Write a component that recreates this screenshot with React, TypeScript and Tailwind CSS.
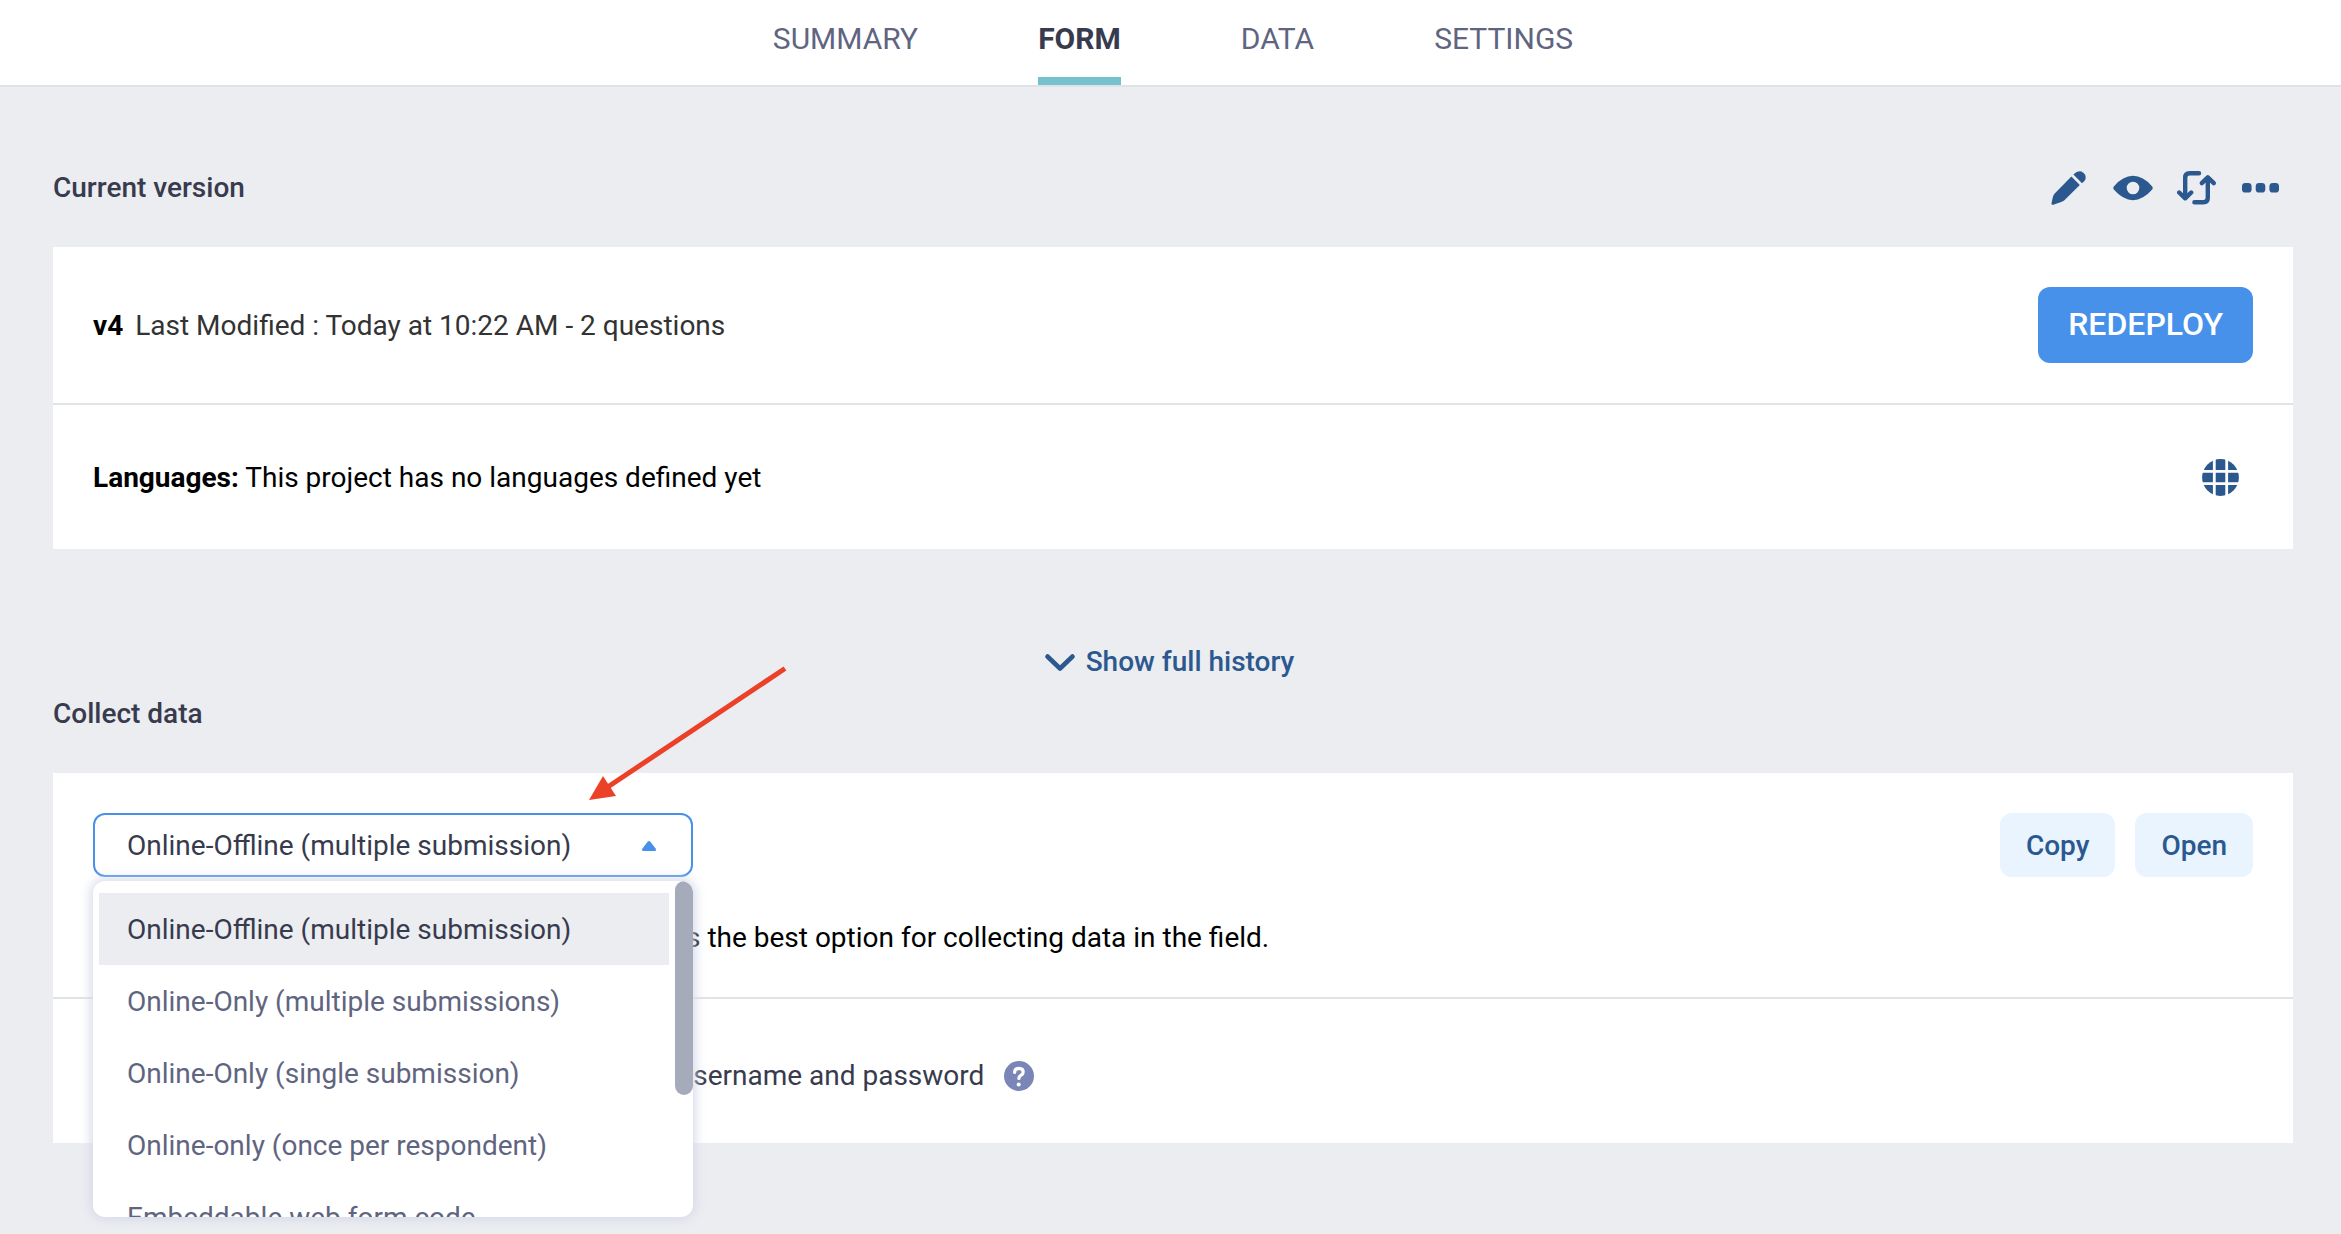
import React from "react";

const tabs = ["SUMMARY", "FORM", "DATA", "SETTINGS"];

const modes = [
    "Online-Offline (multiple submission)",
    "Online-Only (multiple submissions)",
    "Online-Only (single submission)",
    "Online-only (once per respondent)",
    "Embeddable web form code",
];

function EditIcon()
{
    return (
        <svg className="size-10" viewBox="0 0 40 40" fill="currentColor" aria-hidden="true">
            <path d="M22.400 8.600 30.800 17 15.400 32.300q-1.400 1.300-3.200 1.700L4.400 36.800q-2.400.4-1.900-1.600l1.300-6q.4-2 1.900-3.600L22.400 8.600Z" />
            <path d="M24.400 6.600q4-4.400 8-3.200 5.400 2.600 4 7.800-.6 1.900-3.400 4L24.400 6.600Z" />
        </svg>
    )
}

function EyeIcon()
{
    return (
        <svg className="size-10" viewBox="0 0 40 40" fill="currentColor" aria-hidden="true">
            <path fillRule="evenodd" d="M.8 18.4Q10 7.8 20 7.800T39.200 18.400q1 1.600 0 3.200Q30 32.200 20 32.200T.8 21.600q-1-1.600 0-3.200ZM20 13.700a6.300 6.300 0 1 0 0 12.600 6.300 6.300 0 0 0 0-12.600Z" />
        </svg>
    )
}

function ReplaceIcon()
{
    return (
        <svg className="size-10" viewBox="0 0 40 40" fill="none" stroke="currentColor" strokeWidth="4.4" strokeLinecap="round" strokeLinejoin="round" aria-hidden="true">
            <path d="M22 5.200H12.600q-4.400 0-4.400 4.400V29.500M2.200 24.500l6 5.800 6-5.800" />
            <path d="M17.400 34.200h9q4.400 0 4.400-4.400V10.500M24.800 15.200l6-5.800 6 5.800" />
        </svg>
    )
}

function MoreIcon()
{
    return (
        <svg className="size-10" viewBox="0 0 40 40" fill="currentColor" aria-hidden="true">
            <rect x="1" y="15" width="9.6" height="9.6" rx="3.4" />
            <rect x="14.7" y="15" width="9.6" height="9.6" rx="3.4" />
            <rect x="28.4" y="15" width="9.6" height="9.6" rx="3.4" />
        </svg>
    )
}

function GlobeIcon()
{
    return (
        <svg className="size-10" viewBox="0 0 40 40" aria-hidden="true">
            <circle cx="19.5" cy="20.5" r="18.4" fill="currentColor" />
            <path d="M13.300 0v40M25.700 0v40M0 14.300h40M0 26.700h40" stroke="#fff" strokeWidth="2.8" />
        </svg>
    )
}

const actions = [
    { label: "Edit form", icon: <EditIcon /> },
    { label: "Preview form", icon: <EyeIcon /> },
    { label: "Replace form", icon: <ReplaceIcon /> },
    { label: "More actions", icon: <MoreIcon /> },
];

function ModeSelect()
{
    const [mode, setMode] = React.useState(modes[0]);
    const [open, setOpen] = React.useState(true);

    function toggle(event: React.MouseEvent<HTMLSelectElement>)
    {
        // the list below replaces the native popup
        event.preventDefault();
        setOpen((prev) => !prev);
    }

    return (
        <div className="relative w-[600px]">
            <select
                aria-label="Collection mode"
                value={mode}
                onMouseDown={toggle}
                onChange={(event) => setMode(event.target.value)}
                className="block h-16 w-full appearance-none rounded-xl border-2 border-[#4891ea] bg-white pl-8 pr-16 pt-0.5 text-[#373b4d] outline-none"
            >
                {modes.map((m) => <option key={m}>{m}</option>)}
            </select>
            <svg className="pointer-events-none absolute right-9 top-7 h-[10px] w-4" viewBox="0 0 16 10" fill="#4891ea" aria-hidden="true">
                <path d="M6.600.7q1.400-1.400 2.800 0l5 6.600Q16 10 13.600 10H2.400Q0 10 1.600 7.300Z" />
            </svg>

            {/* red pointer drawn over the card edge */}
            <svg className="pointer-events-none absolute -top-[148px] right-[-94px] z-20 h-[138px] w-[200px]" viewBox="0 0 200 138" aria-hidden="true">
                <path d="M20 122.500 198 3.500" stroke="#ea4128" strokeWidth="5" />
                <path d="M2 135 16 111 29 131Z" fill="#ea4128" />
            </svg>

            {open && (
                <div className="absolute inset-x-0 top-[68px] z-10 h-[336px] overflow-hidden rounded-xl bg-white shadow-[0_0_12px_2px_#d4d8e8]">
                    <ul className="py-3 pl-[6px] pr-6">
                        {modes.map((m) => (
                            <li key={m}>
                                <button
                                    type="button"
                                    onClick={() => { setMode(m); setOpen(false); }}
                                    className={m === mode
                                        ? "block h-[72px] w-full bg-[#ecedf1] pl-7 pt-0.5 text-left text-[#373b4d]"
                                        : "block h-[72px] w-full pl-7 pt-0.5 text-left text-[#5f6580]"}
                                >
                                    {m}
                                </button>
                            </li>
                        ))}
                    </ul>
                    <div className="absolute right-0 top-0 h-[214px] w-[18px] rounded-full bg-[#a6abbb]" />
                </div>
            )}
        </div>
    )
}

function App()
{
    const [tab, setTab] = React.useState("FORM");
    const [anonymous, setAnonymous] = React.useState(false);

    return (
        <div className="min-h-screen bg-[#ecedf1] font-['Roboto',sans-serif] text-[28px] leading-10 text-black">
            <header className="border-b-2 border-[#e0e2e8] bg-white">
                <nav className="flex justify-center gap-[120px] pl-[5px] text-[30px]">
                    {tabs.map((name) => (
                        <button
                            key={name}
                            type="button"
                            onClick={() => setTab(name)}
                            className={name === tab
                                ? "h-[85px] border-b-8 border-[#74c2cd] font-bold text-[#373b4d]"
                                : "h-[85px] border-b-8 border-transparent text-[#5f6580]"}
                        >
                            {name}
                        </button>
                    ))}
                </nav>
            </header>

            <main className="pl-[53px] pr-12 pt-[61px]">
                <section>
                    <div className="flex h-20 items-center justify-between">
                        <h2 className="font-medium text-[#373b4d]">Current version</h2>
                        <div className="flex text-[#2b598f]">
                            {actions.map((action) => (
                                <button key={action.label} type="button" aria-label={action.label} className="flex size-16 items-center justify-center">
                                    {action.icon}
                                </button>
                            ))}
                        </div>
                    </div>
                    <div className="mt-[19px] bg-white">
                        <div className="flex items-center justify-between border-b-2 border-[#e2e3e9] p-10">
                            <p className="pt-0.5 text-[#333]"><b className="mr-3 text-black">v4</b>Last Modified : Today at 10:22 AM - 2 questions</p>
                            <button type="button" className="h-[76px] rounded-xl bg-[#4891ea] px-[30px] pb-0.5 text-[32px] font-medium text-white">REDEPLOY</button>
                        </div>
                        <div className="flex h-36 items-center justify-between px-10">
                            <p className="pt-0.5"><b>Languages:</b> This project has no languages defined yet</p>
                            <button type="button" aria-label="Manage translations" className="flex size-16 items-center justify-center text-[#2b598f]">
                                <GlobeIcon />
                            </button>
                        </div>
                    </div>
                </section>

                <div className="flex justify-center pt-[93px]">
                    <button type="button" className="flex items-center gap-2.5 pr-2 font-medium text-[#2b598f]">
                        <svg className="h-8 w-8" viewBox="0 0 32 32" fill="none" stroke="currentColor" strokeWidth="4.6" strokeLinecap="round" strokeLinejoin="round" aria-hidden="true">
                            <path d="M3.500 10.500 16 22.500 28.500 10.500" />
                        </svg>
                        Show full history
                    </button>
                </div>

                <section className="pt-3">
                    <h2 className="font-medium text-[#373b4d]">Collect data</h2>
                    <div className="mt-[39px] bg-white">
                        <div className="border-b-2 border-[#e2e3e9] p-10">
                            <div className="flex items-center justify-between">
                                <ModeSelect />
                                <div className="flex gap-5">
                                    <button type="button" className="h-16 rounded-xl bg-[#e9f4fe] px-[26px] pt-0.5 font-medium text-[#2b598f]">Copy</button>
                                    <a href="#open" className="flex h-16 items-center rounded-xl bg-[#e9f4fe] px-[26px] pt-0.5 font-medium text-[#2b598f]">Open</a>
                                </div>
                            </div>
                            <p className="mt-[41px] -mb-px">This allows online and offline submissions and is the best option for collecting data in the field.</p>
                        </div>
                        <div className="flex h-36 items-center gap-5 px-10 pt-2.5">
                            <label className="flex items-center gap-3 text-[#373b4d]">
                                <input
                                    type="checkbox"
                                    checked={anonymous}
                                    onChange={(event) => setAnonymous(event.target.checked)}
                                    className="h-8 w-[58px]"
                                />
                                Allow submissions to this form without a username and password
                            </label>
                            <button type="button" aria-label="Help" className="flex size-[30px] items-center justify-center rounded-full bg-[#7a86b8] text-white">
                                <svg className="size-[30px]" viewBox="0 0 30 30" fill="none" aria-hidden="true">
                                    <path d="M10.600 11.400q.2-3.900 4.300-4 4.300.1 4.300 3.600 0 1.900-2.100 3.200-2.200 1.400-2.200 3.200" stroke="currentColor" strokeWidth="3.2" strokeLinecap="round" />
                                    <circle cx="14.7" cy="23.4" r="2" fill="currentColor" />
                                </svg>
                            </button>
                        </div>
                    </div>
                </section>
            </main>
        </div>
    )
}

export default App;
